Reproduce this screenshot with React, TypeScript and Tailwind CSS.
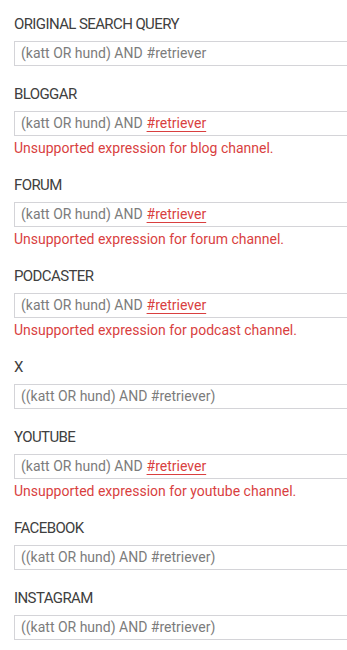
const fields = [
  { label: "ORIGINAL SEARCH QUERY", query: "(katt OR hund) AND ", tag: "#retriever", bad: false },
  { label: "BLOGGAR", query: "(katt OR hund) AND ", tag: "#retriever", bad: true, channel: "blog" },
  { label: "FORUM", query: "(katt OR hund) AND ", tag: "#retriever", bad: true, channel: "forum" },
  { label: "PODCASTER", query: "(katt OR hund) AND ", tag: "#retriever", bad: true, channel: "podcast" },
  { label: "X", query: "((katt OR hund) AND #retriever)", bad: false },
  { label: "YOUTUBE", query: "(katt OR hund) AND ", tag: "#retriever", bad: true, channel: "youtube" },
  { label: "FACEBOOK", query: "((katt OR hund) AND #retriever)", bad: false },
  { label: "INSTAGRAM", query: "((katt OR hund) AND #retriever)", bad: false },
];

export default function App() {
  return (
    <div
      className="w-[347px] h-[650px] overflow-hidden bg-white pl-[14px] pt-[14px]"
      style={{ fontFamily: "Roboto, 'Liberation Sans', sans-serif" }}
    >
      {fields.map((f) => (
        <div key={f.label} className="mb-[18px]">
          <div className="text-[15px] leading-[20px] text-[#404040] tracking-[-0.6px]">{f.label}</div>
          <div className="mt-[7px] h-[25px] w-[345px] border border-[#d4d4d8] flex items-center pl-[6px] text-[14px] text-[#7c7c7c] whitespace-nowrap">
            {f.query}
            {f.bad && <span className="ml-[4px] text-[#d93f3f] underline underline-offset-[3px]">{f.tag}</span>}
            {!f.bad && f.tag && <span className="ml-[4px]">{f.tag}</span>}
          </div>
          {f.bad && (
            <div className="mt-[4px] text-[14px] leading-[17px] text-[#d93f3f]">
              Unsupported expression for {f.channel} channel.
            </div>
          )}
        </div>
      ))}
    </div>
  );
}
